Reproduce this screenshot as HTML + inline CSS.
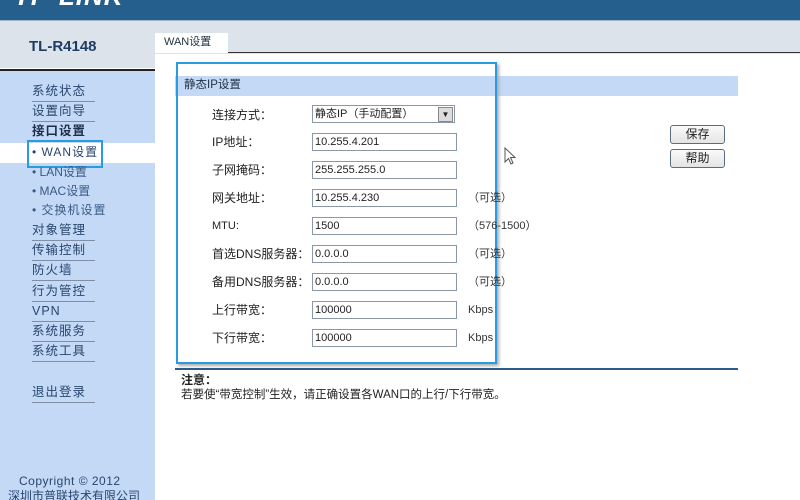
<!DOCTYPE html><html><head><meta charset="utf-8"><style>
html,body{margin:0;width:800px;height:500px;overflow:hidden}
body{background:#fff;font-family:"Liberation Sans","Noto Sans CJK SC",sans-serif;font-size:12px;color:#222;position:relative}
.a{position:absolute;line-height:1.2}
.hdr{left:0;top:0;width:800px;height:20px;background:#245f8e}
.logo{left:14px;top:-19px;color:#fff;font-size:26px;font-weight:bold;font-style:italic;letter-spacing:1px;line-height:30px}
.gray{left:0;top:20px;width:800px;height:33px;background:#dde3ea;border-top:1px solid #9fb3c8}
.gray2{left:0;top:53px;width:155px;height:15px;background:#dde3ea}
.side{left:0;top:69px;width:155px;height:431px;background:#c4d9f6;border-top:2px solid #222}
.menu{left:32px;width:63px;font-size:12.5px;color:#28466e;border-bottom:1px solid #7f8fa6;height:19px;line-height:19px;letter-spacing:1px}
.lbl{left:212px;font-size:12px;color:#222}
.inp{left:312px;width:141px;height:16px;border:1px solid #8a97a8;background:#fff;font-size:11px;line-height:16px;padding-left:2px;box-sizing:content-box}
.nt{left:468px;font-size:11px;color:#333}
.btn{left:670px;width:53px;height:17px;border:1px solid #5c6c80;border-radius:3px;background:linear-gradient(#fafafa,#e4e4e4);text-align:center;line-height:17px;font-size:12px}
</style></head><body>
<div class="a hdr"></div><div class="a logo">TP-LINK</div>
<div class="a gray"></div><div class="a gray2"></div>
<div class="a" style="left:29px;top:38px;font-size:15px;font-weight:bold;color:#1d3c66">TL-R4148</div>
<div class="a" style="left:155px;top:33px;width:73px;height:20px;background:#fff"></div>
<div class="a" style="left:164px;top:36px;font-size:11px;color:#234">WAN设置</div>
<div class="a" style="left:228px;top:52px;width:572px;height:1px;background:#333"></div>
<div class="a side"></div>
<div class="a" style="left:0;top:143px;width:155px;height:20px;background:#fff"></div>
<div class="a menu" style="top:82px">系统状态</div>
<div class="a menu" style="top:102px">设置向导</div>
<div class="a menu" style="top:122px;font-weight:bold;color:#1b2e4a">接口设置</div>
<div class="a" style="left:32px;top:145px;font-size:12px;color:#28466e;letter-spacing:1px">• WAN设置</div>
<div class="a" style="left:27px;top:140px;width:72px;height:24px;border:2px solid #2a9be0"></div>
<div class="a" style="left:32px;top:165px;color:#3a5a86">• LAN设置</div>
<div class="a" style="left:32px;top:184px;color:#3a5a86">• MAC设置</div>
<div class="a" style="left:32px;top:203px;color:#3a5a86;letter-spacing:1px">• 交换机设置</div>
<div class="a menu" style="top:221px">对象管理</div>
<div class="a menu" style="top:241px">传输控制</div>
<div class="a menu" style="top:261px">防火墙</div>
<div class="a menu" style="top:282px">行为管控</div>
<div class="a menu" style="top:302px">VPN</div>
<div class="a menu" style="top:322px">系统服务</div>
<div class="a menu" style="top:342px">系统工具</div>
<div class="a menu" style="top:383px">退出登录</div>
<div class="a" style="left:19px;top:474px;color:#28466e;font-size:12px;letter-spacing:.5px">Copyright © 2012</div>
<div class="a" style="left:8px;top:489px;color:#28466e;font-size:12px">深圳市普联技术有限公司</div>
<div class="a" style="left:175px;top:76px;width:563px;height:20px;background:#c4d9f6"></div>
<div class="a" style="left:184px;top:79px;font-size:11.5px;color:#234">静态IP设置</div>
<div class="a" style="left:176px;top:62px;width:317px;height:298px;border:2px solid #2a9be0;box-shadow:2px 2px 3px #aaa"></div>
<div class="a lbl" style="top:108px">连接方式：</div>
<div class="a inp" style="top:105px;width:139px">静态IP（手动配置）<span style="position:absolute;right:1px;top:1px;width:13px;height:13px;background:#ddd;border:1px solid #888;font-size:8px;line-height:13px;text-align:center">▼</span></div>
<div class="a lbl" style="top:135px">IP地址：</div><div class="a inp" style="top:133px">10.255.4.201</div>
<div class="a lbl" style="top:163px">子网掩码：</div><div class="a inp" style="top:161px">255.255.255.0</div>
<div class="a lbl" style="top:191px">网关地址：</div><div class="a inp" style="top:189px">10.255.4.230</div><div class="a nt" style="top:192px">（可选）</div>
<div class="a lbl" style="top:220px;font-size:11px">MTU:</div><div class="a inp" style="top:217px">1500</div><div class="a nt" style="top:220px">（576-1500）</div>
<div class="a lbl" style="top:247px">首选DNS服务器：</div><div class="a inp" style="top:245px">0.0.0.0</div><div class="a nt" style="top:248px">（可选）</div>
<div class="a lbl" style="top:275px">备用DNS服务器：</div><div class="a inp" style="top:273px">0.0.0.0</div><div class="a nt" style="top:276px">（可选）</div>
<div class="a lbl" style="top:303px">上行带宽：</div><div class="a inp" style="top:301px">100000</div><div class="a nt" style="top:304px">Kbps</div>
<div class="a lbl" style="top:331px">下行带宽：</div><div class="a inp" style="top:329px">100000</div><div class="a nt" style="top:332px">Kbps</div>
<div class="a btn" style="top:125px">保存</div>
<div class="a btn" style="top:149px">帮助</div>
<svg class="a" style="left:504px;top:147px" width="14" height="20"><path d="M1 1 L1 15 L4.5 11.5 L7 17 L9 16 L6.5 10.5 L11 10.5 Z" fill="#fff" stroke="#555"/></svg>
<div class="a" style="left:175px;top:368px;width:563px;height:2px;background:#2d5a86"></div>
<div class="a" style="left:181px;top:373px;font-weight:bold;font-size:12px">注意：</div>
<div class="a" style="left:181px;top:389px;font-size:11.5px">若要使“带宽控制”生效，请正确设置各WAN口的上行/下行带宽。</div>
</body></html>
